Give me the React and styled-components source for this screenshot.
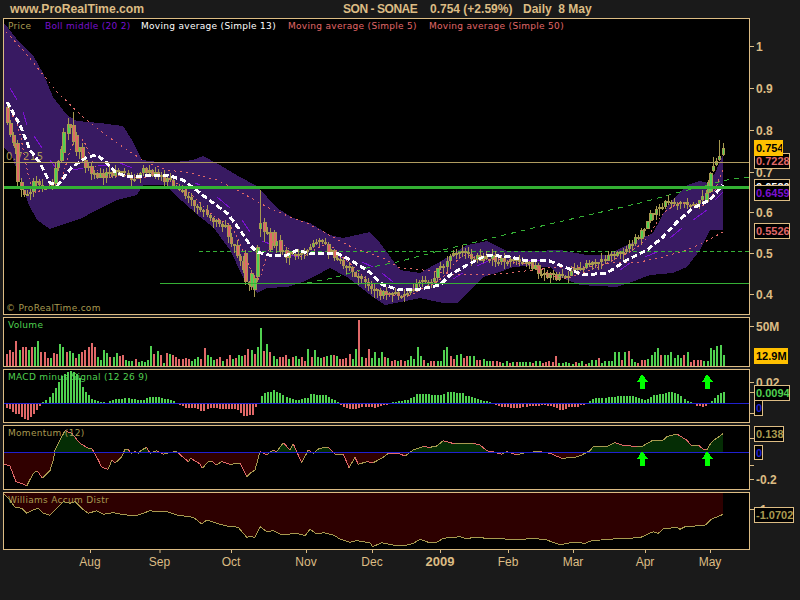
import React from 'react';
import styled, { createGlobalStyle } from 'styled-components';

const TAN = '#dcbc84';
const OLIVE = '#a89a50';
const RED = '#e06868';
const GREEN = '#50d050';
const BLUE = '#2020d0';
const PURPLE = '#7a10d0';
const LIME = '#00ff00';

const GlobalStyle = createGlobalStyle`
  html, body { margin: 0; padding: 0; background: #1a1a1a; }
  #root { width: 800px; height: 600px; overflow: hidden; }
`;

const Page = styled.div`
  width: 800px;
  height: 600px;
  background: #1a1a1a;
  color: ${TAN};
  font-family: "Liberation Sans", Arial, sans-serif;
`;

const Header = styled.header`
  height: 18px;
  display: flex;
  align-items: center;
  padding-left: 10px;
  font-size: 12px;
  font-weight: bold;
  white-space: nowrap;
`;

const Logo = styled.span`
  width: 333px;
  font-size: 12.2px;
`;

const TitleBit = styled.span`
  width: ${p => p.$w}px;
  letter-spacing: ${p => p.$ls || 0}px;
`;

const Stack = styled.div`
  display: flex;
  flex-direction: column;
  gap: 2px;
  padding-left: 3px;
`;

const Row = styled.div`
  display: flex;
  height: ${p => p.$h}px;
`;

const Frame = styled.div`
  position: relative;
  box-sizing: border-box;
  width: 747px;
  height: 100%;
  border: 1px solid ${TAN};
  background: #000;
  overflow: hidden;
`;

const Chart = styled.svg`
  display: block;
  shape-rendering: crispEdges;
`;

const Legend = styled.div`
  position: absolute;
  left: 4px;
  top: 1px;
  display: flex;
  font: 9px "DejaVu Sans", sans-serif;
  line-height: 12px;
  letter-spacing: 0.3px;
  white-space: nowrap;
`;

const LegendItem = styled.span`
  color: ${p => p.$color};
  width: ${p => (p.$w ? `${p.$w}px` : 'auto')};
`;

const Copyright = styled.div`
  position: absolute;
  left: 2px;
  bottom: 0;
  color: ${OLIVE};
  font: 9px "DejaVu Sans", sans-serif;
  line-height: 12px;
  letter-spacing: 0.3px;
`;

const Axis = styled.div`
  position: relative;
  width: 50px;
`;

const Scale = styled.svg`
  display: block;
  text {
    font-family: "Liberation Sans", Arial, sans-serif;
    font-size: 12px;
    font-weight: bold;
    fill: ${TAN};
  }
`;

const Tag = styled.span`
  position: absolute;
  left: 4px;
  top: ${p => p.$y}px;
  box-sizing: border-box;
  height: ${p => p.$h || 16}px;
  width: ${p => p.$w}px;
  padding-left: 1px;
  border: 1px solid ${p => (p.$fill ? p.$fill : TAN)};
  background: ${p => p.$fill || '#000'};
  color: ${p => p.$color};
  font-size: 11px;
  line-height: 14px;
  font-weight: bold;
  white-space: nowrap;
  overflow: hidden;
`;

const DateScale = styled.svg`
  display: block;
  text {
    font-family: "Liberation Sans", Arial, sans-serif;
    font-size: 12px;
    fill: ${TAN};
    text-anchor: middle;
  }
  text.year {
    font-size: 13px;
    font-weight: bold;
  }
`;

const LAST = 723;
const COUNT = 237;
const STEP = (LAST - 6) / (COUNT - 1);
const barX = i => 6 + i * STEP;

const interp = (pts, x) => {
  if (x <= pts[0][0]) return pts[0][1];
  for (let i = 1; i < pts.length; i++) {
    if (x <= pts[i][0]) {
      const [x0, y0] = pts[i - 1];
      const [x1, y1] = pts[i];
      return y0 + ((y1 - y0) * (x - x0)) / (x1 - x0 || 1);
    }
  }
  return pts[pts.length - 1][1];
};

const toStr = pts => pts.map(p => p.join(',')).join(' ');

// trace in page coordinates
const upper = [[4,23],[20,43],[33,55],[43,73],[53,97],[67,115],[77,121],[100,123],[123,126],[132,140],[142,160],[167,163],[193,160],[203,156],[220,165],[240,177],[255,185],[267,197],[277,208],[293,218],[310,223],[330,235],[343,238],[370,232],[380,243],[400,270],[420,273],[443,260],[467,245],[487,241],[507,251],[533,251],[560,250],[587,255],[607,255],[627,245],[653,233],[667,207],[677,195],[687,185],[700,181],[708,183],[715,173],[723,155]];
const lower = [[4,147],[12,157],[20,178],[28,203],[37,220],[50,229],[67,223],[80,219],[97,210],[117,200],[137,195],[143,185],[167,185],[173,193],[200,217],[213,227],[230,250],[243,277],[257,293],[267,288],[287,287],[303,282],[317,275],[330,268],[347,277],[360,287],[373,297],[385,305],[400,302],[420,298],[443,303],[457,303],[470,290],[483,277],[500,272],[513,267],[527,266],[550,267],[560,277],[580,285],[617,287],[637,280],[650,275],[673,273],[687,267],[700,250],[710,230],[723,230]];
const ma13 = [[7,102],[20,125],[30,150],[40,163],[50,183],[58,185],[72,167],[87,157],[97,155],[107,163],[115,172],[127,177],[143,176],[167,175],[183,180],[200,193],[213,203],[227,213],[240,230],[250,245],[257,252],[273,256],[287,255],[298,250],[310,254],[337,253],[350,260],[367,270],[383,285],[400,290],[420,289],[440,285],[450,275],[467,265],[487,255],[510,257],[523,260],[547,260],[567,268],[583,275],[607,273],[627,260],[647,250],[663,237],[677,222],[693,208],[710,200],[723,185]];
const ma50 = [[6,32],[23,50],[45,77],[57,92],[83,117],[103,133],[123,147],[147,163],[167,170],[190,173],[217,180],[237,190],[267,207],[290,217],[307,223],[333,237],[353,248],[383,258],[400,268],[423,270],[450,274],[500,274],[533,270],[547,268],[587,267],[613,263],[640,262],[663,257],[687,250],[703,243],[723,232]];
const trend = [[307,283],[333,278],[367,268],[397,262],[447,249],[533,228],[640,203],[680,192],[727,180],[749,177]];
const price = [[7,112],[12,130],[15,150],[20,185],[25,200],[30,190],[35,180],[40,185],[50,190],[55,170],[60,150],[65,135],[72,130],[78,145],[85,165],[92,175],[100,175],[108,175],[115,172],[125,175],[135,178],[145,170],[155,175],[165,180],[175,185],[185,195],[195,205],[205,215],[215,220],[225,225],[230,240],[240,262],[245,280],[250,285],[255,270],[262,225],[270,245],[278,240],[285,255],[295,255],[310,245],[320,240],[330,252],[345,265],[360,280],[375,293],[385,293],[400,295],[415,285],[430,280],[445,262],[455,250],[470,258],[490,257],[510,262],[525,262],[540,272],[555,278],[570,272],[590,265],[610,255],[625,248],[640,235],[650,215],[662,205],[672,200],[685,205],[700,203],[708,185],[712,170],[717,158],[723,150]];
const middleBits = [[10,88,17,100],[23,112,27,125],[34,136,42,148],[50,160,56,168],[73,170,83,168],[98,165,107,165],[120,163,132,168],[195,183,200,185],[217,197,230,208],[242,220,250,232],[262,241,273,245],[290,255,298,257],[337,255,347,260],[362,262,373,267],[382,273,393,282],[405,288,417,288],[453,279,463,273],[477,266,490,260],[527,260,543,260],[620,270,630,263],[645,257,657,252],[670,238,682,228],[693,220,707,210],[715,200,723,192]];

// [x, wickTop, wickBottom, bodyTop, bodyBottom, up]
const bigCandles = [[7,104,125,107,123,0],[10,120,137,123,135,0],[13,132,146,135,143,0],[17,140,186,143,182,0],[63,128,160,132,153,1],[68,118,140,124,134,1],[73,112,145,125,142,0],[76,132,156,135,152,0],[245,250,285,253,282,0],[247,280,300,283,294,1],[251,270,290,273,287,1],[254,275,297,278,290,1],[257,245,282,247,277,1],[260,190,237,223,229,1],[264,218,242,222,232,0],[270,228,252,232,250,0],[274,230,248,232,246,0],[280,235,255,240,252,0],[706,190,203,193,202,1],[710,172,193,173,192,1],[713,157,172,166,171,1],[716,158,166,161,165,1],[719,140,161,156,160,1],[723,143,156,148,155,1]];

const mulberry = seed => () => {
  seed = (seed + 0x6d2b79f5) | 0;
  let t = Math.imul(seed ^ (seed >>> 15), 1 | seed);
  t = (t + Math.imul(t ^ (t >>> 7), 61 | t)) ^ t;
  return ((t ^ (t >>> 14)) >>> 0) / 4294967296;
};

const candles = (() => {
  const rnd = mulberry(1287);
  const out = [];
  let prev = interp(price, 6);
  for (let i = 0; i < COUNT; i++) {
    const x = Math.round(barX(i));
    const big = bigCandles.find(b => Math.abs(b[0] - x) < 1.6);
    if (big) {
      out.push({ x: big[0], hi: big[1], lo: big[2], top: big[3], bot: big[4], up: !!big[5] });
      prev = big[5] ? big[3] : big[4];
      continue;
    }
    const c = interp(price, x) + (rnd() - 0.5) * 7;
    const top = Math.round(Math.min(prev, c));
    const bot = Math.max(Math.round(Math.max(prev, c)), top + 2);
    out.push({ x, hi: top - Math.round(rnd() * 6), lo: bot + Math.round(rnd() * 7), top, bot, up: c < prev });
    prev = c;
  }
  return out;
})();

const ma5 = (() => {
  const pts = [];
  for (let x = 12; x <= LAST; x += 3) {
    let sum = 0;
    for (let k = 0; k < 5; k++) sum += interp(price, x - 3 * k - 3);
    pts.push([x, +(sum / 5 + 2).toFixed(1)]);
  }
  return pts;
})();

const volumes = [-12,-16,-14,-25,16,-19,-19,16,-19,19,25,-14,-14,-8,8,-13,-12,22,19,-14,15,13,-8,12,-14,-16,-19,-23,-19,9,6,16,13,-9,9,13,-10,-11,6,5,5,-7,4,5,4,6,20,-12,15,-11,3,-13,12,-11,-9,-7,-7,-8,-7,5,7,9,-7,-18,11,9,6,-7,-9,5,-7,-11,7,-8,11,10,-11,-17,16,-12,19,38,-15,22,-14,10,7,-9,-9,-11,7,-9,10,7,-9,-5,17,-9,16,9,8,-9,10,11,-11,10,-7,-7,-8,-12,7,17,-46,9,-8,-17,8,14,8,14,-9,8,-5,-6,5,-6,-5,6,10,7,19,10,-6,3,-5,-5,5,5,16,19,-10,-7,11,12,-8,-10,10,10,-6,-6,7,5,5,-5,-5,-4,3,5,-3,4,-4,4,4,4,4,-3,5,5,-3,-4,-5,-4,-10,3,3,4,3,2,-4,3,5,-2,3,6,6,-8,3,5,5,5,14,14,-6,14,-15,7,4,-3,-6,-6,7,11,14,18,-11,11,11,14,8,11,8,-11,14,-4,-6,-6,-6,5,5,18,16,20,21,11];
// bar index -> x, the spikes pin the list to where they sit in the chart
const volumeAnchors = [[0,6],[81,260],[112,358],[124,397],[volumes.length - 1,723]];

// height of the histogram read off at 3x: x (3x page) and signed height
const macd = [[18,-4],[27,-5],[36,-8],[45,-10],[54,-10],[63,-13],[72,-15],[81,-16],[90,-13],[99,-10],[108,-6],[117,-2],[126,1],[135,3],[144,5],[153,8],[162,13],[171,18],[180,27],[189,28],[198,30],[207,32],[216,32],[225,30],[234,28],[243,18],[252,12],[261,9],[270,5],[279,3],[288,2],[306,1],[315,0],[324,1],[333,3],[342,4],[360,4],[369,5],[378,6],[387,4],[405,4],[414,3],[432,3],[441,6],[477,6],[486,5],[495,4],[504,4],[513,3],[522,1],[531,0],[540,-1],[549,-3],[558,-4],[585,-4],[594,-5],[603,-8],[612,-7],[621,-5],[630,-4],[648,-4],[660,-5],[705,-5],[715,-7],[725,-12],[735,-13],[745,-11],[755,-12],[765,-3],[775,0],[780,6],[790,10],[810,11],[820,13],[830,11],[840,9],[850,7],[860,6],[870,4],[890,3],[900,4],[920,5],[930,9],[950,8],[970,8],[980,7],[990,5],[1000,3],[1010,1],[1020,-1],[1035,-4],[1045,-5],[1060,-5],[1075,-4],[1090,-3],[1110,-3],[1120,-4],[1135,-2],[1150,-1],[1170,0],[1180,1],[1200,2],[1220,3],[1238,6],[1250,9],[1275,9],[1300,8],[1325,8],[1340,11],[1350,11],[1370,10],[1385,10],[1395,7],[1415,6],[1435,3],[1460,2],[1475,0],[1490,-2],[1510,-3],[1540,-4],[1555,-4],[1570,-3],[1600,-2],[1630,-1],[1645,-2],[1665,-4],[1680,-6],[1690,-6],[1705,-3],[1730,-3],[1740,-1],[1760,0],[1770,3],[1790,5],[1810,5],[1830,6],[1860,7],[1890,7],[1915,5],[1935,3],[1945,5],[1960,8],[1980,9],[2010,11],[2030,9],[2050,4],[2070,1],[2090,-2],[2110,-3],[2125,0],[2135,3],[2150,8],[2170,11]];

const third = (pts, top) => pts.map(([x, y]) => [+(x / 3).toFixed(1), +(top + y / 3).toFixed(1)]);

const momentum = third([[12,132],[30,138],[48,185],[70,192],[80,198],[100,160],[112,152],[127,175],[150,152],[160,120],[165,90],[180,60],[195,32],[215,40],[240,70],[265,85],[275,85],[295,120],[305,142],[325,148],[335,120],[345,130],[365,110],[375,88],[385,88],[392,100],[405,95],[415,100],[425,90],[440,82],[450,100],[470,92],[490,103],[510,97],[530,95],[565,125],[572,115],[600,132],[607,145],[625,125],[635,123],[648,135],[665,125],[690,133],[720,130],[740,170],[750,160],[765,150],[780,95],[800,105],[820,90],[830,95],[850,68],[870,90],[880,72],[905,128],[925,90],[940,100],[958,85],[985,82],[1005,102],[1030,102],[1047,143],[1065,112],[1075,133],[1100,125],[1120,128],[1150,112],[1165,100],[1200,102],[1215,108],[1240,90],[1270,80],[1290,82],[1310,78],[1330,62],[1365,72],[1385,70],[1420,70],[1440,75],[1460,92],[1485,97],[1505,103],[1520,95],[1550,105],[1580,97],[1620,95],[1650,100],[1685,115],[1725,112],[1745,105],[1770,92],[1780,80],[1820,80],[1845,68],[1865,75],[1910,80],[1925,80],[1960,60],[1990,60],[2000,50],[2030,42],[2060,60],[2075,78],[2095,75],[2110,88],[2120,90],[2135,65],[2150,55],[2170,40]], 420);

const williams = third([[12,222],[30,240],[45,262],[65,265],[80,280],[100,270],[115,265],[130,280],[150,286],[170,265],[190,245],[210,250],[225,245],[245,265],[265,280],[290,272],[310,283],[340,278],[365,283],[395,287],[415,285],[450,272],[470,275],[495,273],[530,285],[580,292],[605,312],[620,300],[650,310],[680,318],[715,322],[740,352],[750,350],[765,352],[780,320],[800,335],[820,332],[840,342],[870,342],[890,340],[915,347],[930,328],[950,342],[970,338],[1000,345],[1020,357],[1050,367],[1070,362],[1110,368],[1118,380],[1145,368],[1180,375],[1200,375],[1220,375],[1240,370],[1260,358],[1285,367],[1310,367],[1330,355],[1380,350],[1400,357],[1420,352],[1480,356],[1550,358],[1610,356],[1640,360],[1680,374],[1720,367],[1755,370],[1775,362],[1840,357],[1880,355],[1920,353],[1960,335],[1975,340],[1990,327],[2030,322],[2040,328],[2055,320],[2115,316],[2135,297],[2170,283]], 420);

const ZERO = 452;

const Arrow = ({ x, y }) => (
  <polygon points={`${x},${y} ${x + 6},${y + 8} ${x + 3},${y + 8} ${x + 3},${y + 15} ${x - 2},${y + 15} ${x - 2},${y + 8} ${x - 5},${y + 8}`} fill={LIME} />
);

const Candle = ({ c }) => {
  const h = c.bot - c.top;
  const wide = h >= 8;
  return (
    <g>
      <rect x={c.x} y={c.hi} width="1" height={c.lo - c.hi} fill={OLIVE} />
      <rect x={c.x - 1} y={c.top} width={wide ? 4 : 3} height={h} fill={OLIVE} />
      {h > 3 && (
        <rect x={c.x} y={c.top + 1} width={wide ? 2 : 1} height={h - 2} fill={c.up ? GREEN : RED} />
      )}
    </g>
  );
};

const MainChart = () => (
  <Chart width="745" height="295" viewBox="4 19 745 295">
    <polygon points={toStr([...upper, ...[...lower].reverse()])} fill="#381a62" />
    <text x="6" y="160" fill={OLIVE} fontFamily="DejaVu Sans" fontSize="10" letterSpacing="0.4">0.7215</text>
    <polyline points={toStr(ma50)} fill="none" stroke={RED} strokeDasharray="2 4" />
    {middleBits.map((b, i) => (
      <line key={i} x1={b[0]} y1={b[1]} x2={b[2]} y2={b[3]} stroke={PURPLE} />
    ))}
    <polyline points={toStr(trend)} fill="none" stroke="#35b035" strokeDasharray="5 5" />
    <line x1="199" y1="251.5" x2="749" y2="251.5" stroke="#35b035" strokeDasharray="4 3" />
    {candles.map((c, i) => <Candle key={i} c={c} />)}
    <polyline points={toStr(ma5)} fill="none" stroke={RED} strokeDasharray="2 3" />
    <polyline points={toStr(ma13)} fill="none" stroke="#fff" strokeWidth="3" strokeDasharray="6 3" />
    <rect x="4" y="162" width="745" height="1" fill="#b09c60" />
    <rect x="160" y="283" width="589" height="1" fill="#35b035" />
    <rect x="4" y="186" width="745" height="3" fill="#33b033" />
  </Chart>
);

const VolumeChart = () => (
  <Chart width="745" height="48" viewBox="4 318 745 48">
    {volumes.map((v, i) => (
      <rect
        key={i}
        x={Math.round(interp(volumeAnchors, i))}
        y={366 - Math.abs(v)}
        width="2"
        height={Math.abs(v)}
        fill={v < 0 ? RED : GREEN}
      />
    ))}
  </Chart>
);

const MacdChart = () => (
  <Chart width="745" height="52" viewBox="4 370 745 52">
    {Array.from({ length: COUNT }, (_, i) => {
      const x = Math.round(barX(i));
      const v = Math.round(interp(macd, x * 3));
      return (
        <rect
          key={i}
          x={x}
          y={v > 0 ? 403 - v : 404}
          width="2"
          height={Math.abs(v)}
          fill={v > 0 ? GREEN : RED}
        />
      );
    })}
    <rect x="4" y="403" width="745" height="1" fill={BLUE} />
    <Arrow x={642} y={374} />
    <Arrow x={707} y={374} />
  </Chart>
);

const MomentumChart = () => {
  const area = toStr([[momentum[0][0], ZERO], ...momentum, [LAST, ZERO]]);
  return (
    <Chart width="745" height="63" viewBox="4 426 745 63">
      <defs>
        <clipPath id="aboveZero"><rect x="4" y="426" width="745" height={ZERO - 426} /></clipPath>
        <clipPath id="belowZero"><rect x="4" y={ZERO} width="745" height="40" /></clipPath>
      </defs>
      <polygon points={area} fill="#052d05" clipPath="url(#aboveZero)" />
      <polygon points={area} fill="#300000" clipPath="url(#belowZero)" />
      {momentum.slice(1).map((p, i) => {
        const a = momentum[i];
        return <line key={i} x1={a[0]} y1={a[1]} x2={p[0]} y2={p[1]} stroke={p[1] > a[1] ? RED : OLIVE} />;
      })}
      <rect x="4" y={ZERO} width="745" height="1" fill={BLUE} />
      <Arrow x={642} y={451} />
      <Arrow x={707} y={451} />
    </Chart>
  );
};

const WilliamsChart = () => (
  <Chart width="745" height="56" viewBox="4 493 745 56">
    <polygon points={toStr([[4, 493], ...williams, [LAST, 493]])} fill="#2d0000" />
    <polyline points={toStr(williams)} fill="none" stroke={OLIVE} />
  </Chart>
);

// ticks and their numbers, y is counted from the top of the row
const AxisScale = ({ h, ticks }) => (
  <Scale width="50" height={h}>
    {ticks.map(([y, label], i) => (
      <g key={i}>
        <rect x="0" y={y} width="4" height="1" fill={TAN} />
        {label && <text x="6" y={y + 5}>{label}</text>}
      </g>
    ))}
  </Scale>
);

const dates = [
  ['Aug', 90], ['Sep', 159.5], ['Oct', 231], ['Nov', 306], ['Dec', 372],
  ['2009', 440, true], ['Feb', 508], ['Mar', 573], ['Apr', 645], ['May', 710],
];

const priceTicks = [[28, '1'], [70, '0.9'], [112, '0.8'], [154, '0.7'], [194, '0.6'], [235, '0.5'], [276, '0.4']];

export default function App() {
  return (
    <Page>
      <GlobalStyle />
      <Header>
        <Logo>www.ProRealTime.com</Logo>
        <TitleBit $w={87} $ls={-0.45}>SON - SONAE</TitleBit>
        <TitleBit $w={93}>0.754 (+2.59%)</TitleBit>
        <TitleBit>Daily&nbsp; 8 May</TitleBit>
      </Header>
      <Stack>
        <Row $h={297}>
          <Frame>
            <MainChart />
            <Legend>
              <LegendItem $color={OLIVE} $w={37}>Price</LegendItem>
              <LegendItem $color={PURPLE} $w={96}>Boll middle (20 2)</LegendItem>
              <LegendItem $color="#fff" $w={147}>Moving average (Simple 13)</LegendItem>
              <LegendItem $color={RED} $w={141}>Moving average (Simple 5)</LegendItem>
              <LegendItem $color={RED}>Moving average (Simple 50)</LegendItem>
            </Legend>
            <Copyright>© ProRealTime.com</Copyright>
          </Frame>
          <Axis>
            <AxisScale h={297} ticks={priceTicks} />
            <Tag $y={135} $w={36} $color={RED}>0.7228</Tag>
            <Tag $y={122} $w={29} $fill="#ffc000" $color="#000">0.754</Tag>
            <Tag $y={161} $w={36} $color="#fff">0.6520</Tag>
            <Tag $y={167} $w={36} $color={PURPLE}>0.6459</Tag>
            <Tag $y={205} $w={36} $color={RED}>0.5526</Tag>
          </Axis>
        </Row>
        <Row $h={50}>
          <Frame>
            <VolumeChart />
            <Legend><LegendItem $color={GREEN}>Volume</LegendItem></Legend>
          </Frame>
          <Axis>
            <AxisScale h={50} ticks={[[9, '50M']]} />
            <Tag $y={31} $w={34} $fill="#ffc000" $color="#000">12.9M</Tag>
          </Axis>
        </Row>
        <Row $h={54}>
          <Frame>
            <MacdChart />
            <Legend><LegendItem $color={GREEN}>MACD minus Signal (12 26 9)</LegendItem></Legend>
          </Frame>
          <Axis>
            <AxisScale h={54} ticks={[[13, '0.02'], [23], [44]]} />
            <Tag $y={31} $w={9} $color={BLUE}>0</Tag>
            <Tag $y={16} $w={36} $color={GREEN}>0.0094</Tag>
          </Axis>
        </Row>
        <Row $h={65}>
          <Frame>
            <MomentumChart />
            <Legend><LegendItem $color={OLIVE}>Momentum (12)</LegendItem></Legend>
          </Frame>
          <Axis>
            <AxisScale h={65} ticks={[[13], [40], [54, '-0.2']]} />
            <Tag $y={1} $w={30} $color={OLIVE}>0.138</Tag>
            <Tag $y={20} $w={9} $h={15} $color={BLUE}>0</Tag>
          </Axis>
        </Row>
        <Row $h={58}>
          <Frame>
            <WilliamsChart />
            <Legend><LegendItem $color={OLIVE}>Williams Accum Distr</LegendItem></Legend>
          </Frame>
          <Axis>
            <AxisScale h={58} ticks={[[17, '-1']]} />
            <Tag $y={15} $w={40} $color={OLIVE}>-1.0702</Tag>
          </Axis>
        </Row>
      </Stack>
      <DateScale width="800" height="50">
        {dates.map(([t, x, year]) => (
          <g key={t}>
            <rect x={x} y="0" width="1" height="3" fill={TAN} />
            <text x={x} y={year ? 16 : 15.5} className={year ? 'year' : undefined}>{t}</text>
          </g>
        ))}
      </DateScale>
    </Page>
  );
}
